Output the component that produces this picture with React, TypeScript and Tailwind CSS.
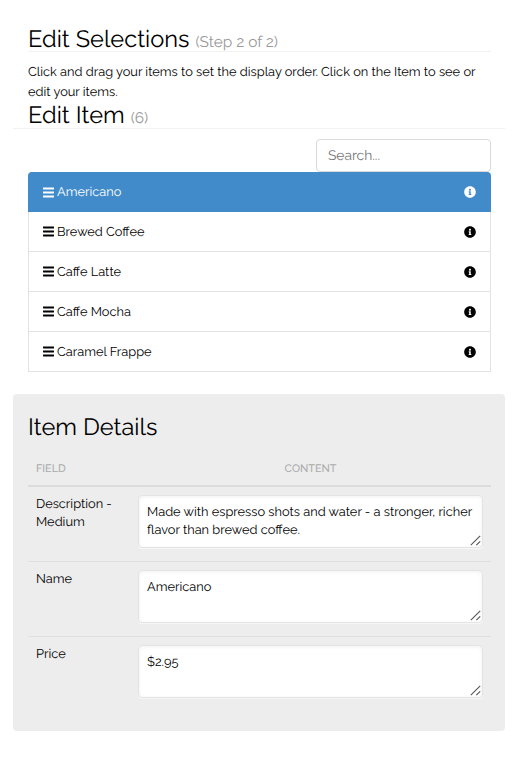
import { FaInfoCircle } from "react-icons/fa";

const items = ["Americano", "Brewed Coffee", "Caffe Latte", "Caffe Mocha", "Caramel Frappe"];

const fields = [
  { label: "Description - Medium", value: "Made with espresso shots and water - a stronger, richer flavor than brewed coffee." },
  { label: "Name", value: "Americano" },
  { label: "Price", value: "$2.95" },
];

function Bars() {
  return (
    <svg className="mr-[3px] h-[11px] w-[11px]" viewBox="0 0 11 11" fill="currentColor">
      <rect y="0.4" width="11" height="2.1" rx="0.4" />
      <rect y="4.4" width="11" height="2.1" rx="0.4" />
      <rect y="8.4" width="11" height="2.1" rx="0.4" />
    </svg>
  );
}

function Grip() {
  return (
    <svg className="absolute right-px bottom-px h-[11px] w-[11px]" viewBox="0 0 11 11" stroke="#555" strokeWidth="1.1">
      <path d="M0.8 10.2 10.2 0.8M6.3 10.2 10.2 6.3" />
    </svg>
  );
}

export default function App() {
  return (
    <main className="h-[759px] w-[521px] bg-white px-[13px] pt-[24px] font-['Raleway','Lato',sans-serif] text-[12.8px] text-black [text-rendering:geometricPrecision]">
      <h1 className="mr-[14px] ml-[15px] flex h-[28px] w-[463px] items-baseline border-b border-[#f2f2f2] text-[23.6px] leading-[30px]">
        <span>Edit Selections</span>
        <small className="ml-[6px] text-[15.4px] text-[#999]">(Step 2 of 2)</small>
      </h1>
      <p className="ml-[15px] mt-[10px] h-[38px] w-[463px] leading-[19.5px]">
        Click and drag your items to set the display order. Click on the Item to see or<br />edit your items.
      </p>
      <h2 className="flex h-[29px] w-[492px] items-baseline border-b border-[#f2f2f2] pl-[15px] text-[23.6px] leading-[30px]">
        <span>Edit Item</span>
        <small className="ml-[6px] text-[15.4px] text-[#999]">(6)</small>
      </h2>
      <div className="mr-[17px] mt-[10px] flex justify-end">
        <div className="flex h-[33px] w-[175px] items-center rounded-[4px] border border-[#d9d9d9] px-[11px] pt-[2px] text-[13.8px] text-[#777]">Search...</div>
      </div>
      <ul className="ml-[15px] w-[463px]">
        {items.map((item, i) => (
          <li
            key={item}
            className={`flex h-[40px] items-center leading-[20px] ${i === 0 ? "rounded-t-[4px] bg-[#428bca] px-[15px] text-white" : "border-x border-b border-[#e3e3e3] px-[14px]"}`}
          >
            <Bars />
            <span className={i === 0 || i === 4 ? "" : "pt-px"}>{item}</span>
            <FaInfoCircle className="ml-auto text-[12px]" />
          </li>
        ))}
      </ul>
      <section className="mt-[22px] h-[337px] w-[492px] rounded-[4px] bg-[#ededed] pl-[15px] pt-[18px]">
        <h2 className="h-[30px] text-[23.6px] leading-[30px]">Item Details</h2>
        <div className="mt-[10px] flex h-[35px] w-[463px] items-center border-b-2 border-[#dcdcdc] pt-px text-[10.8px] font-medium text-[#aaa]">
          <span className="w-[102px] pl-[8px]">FIELD</span>
          <span className="flex-1 text-center">CONTENT</span>
        </div>
        {fields.map((field, i) => (
          <div
            key={field.label}
            className={`flex h-[75px] w-[463px] pt-[8px] ${i < 2 ? "border-b border-[#dfdfdf]" : ""}`}
          >
            <div className="w-[110px] pl-[8px] pr-[20px] leading-[18px]">{field.label}</div>
            <div className="relative h-[53px] w-[345px] rounded-[4px] border border-[#e3e3e3] bg-white pl-[8px] pr-[4px] pt-[7px] leading-[18px] shadow-[inset_0_1px_4px_rgba(0,0,0,0.06),0_1px_0_#f7f7f7]">
              {field.value}
              <Grip />
            </div>
          </div>
        ))}
      </section>
    </main>
  );
}
